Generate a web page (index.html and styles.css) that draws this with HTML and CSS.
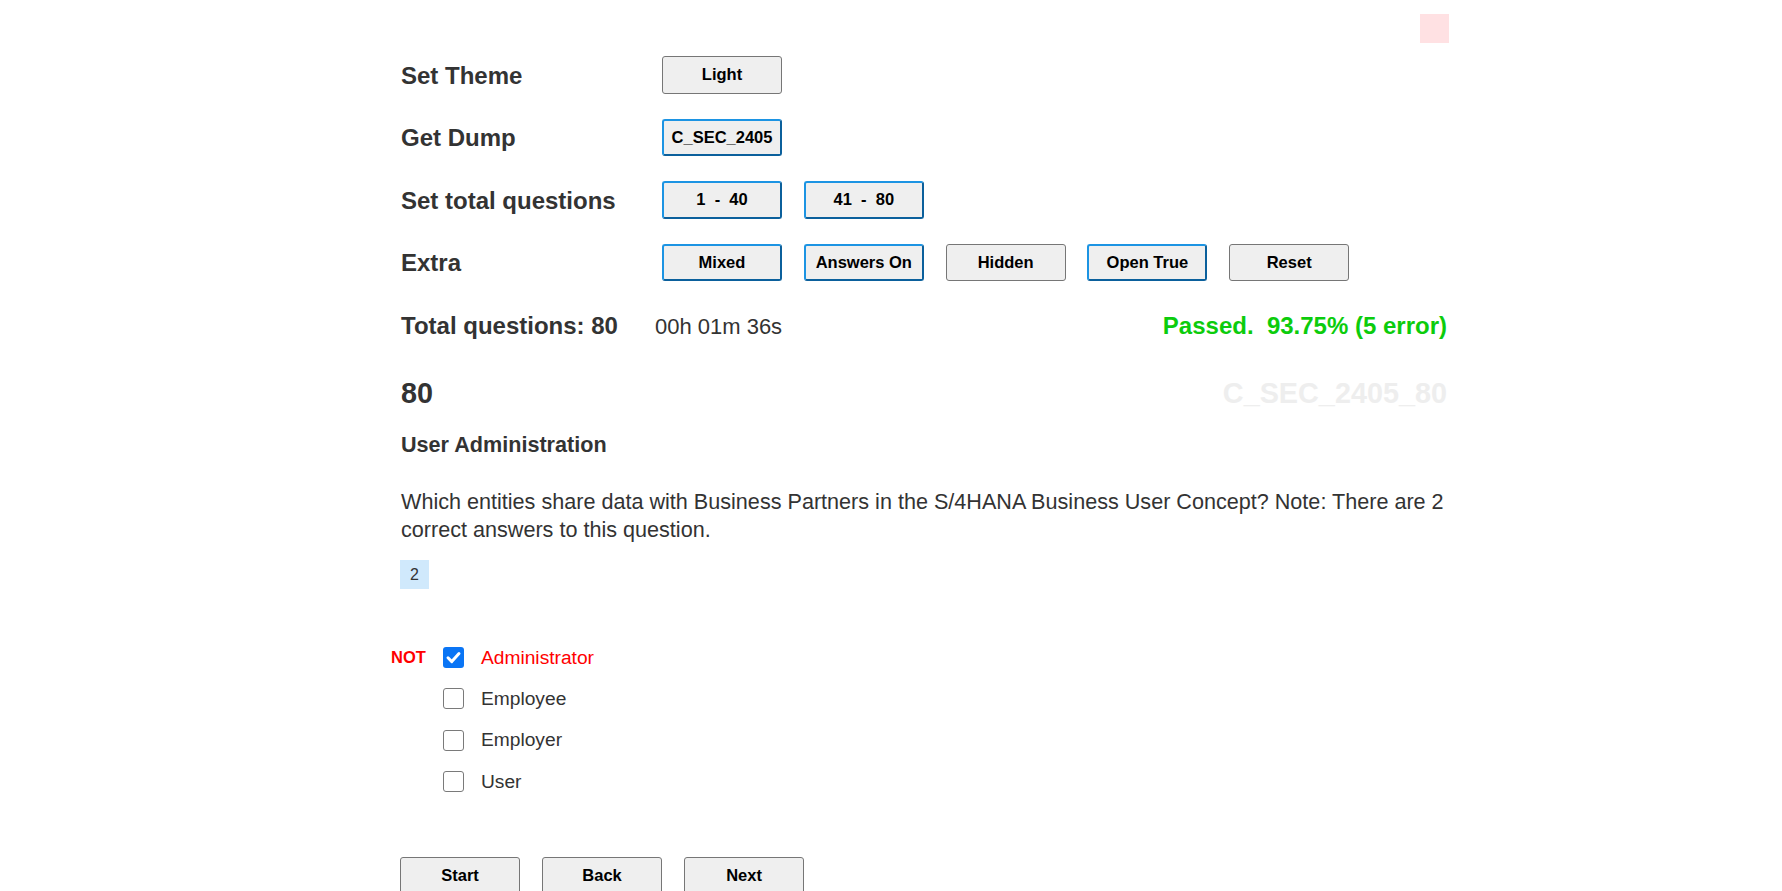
FILE: index.html
```html
<!DOCTYPE html>
<html lang="en">
<head>
<meta charset="utf-8">
<title>Quiz</title>
<link rel="stylesheet" href="styles.css">
</head>
<body>
<div class="status-dot"></div>
<main class="page">
  <section class="settings">
    <div class="setting-row">
      <div class="setting-label">Set Theme</div>
      <div class="btn-group">
        <button class="btn">Light</button>
      </div>
    </div>
    <div class="setting-row">
      <div class="setting-label">Get Dump</div>
      <div class="btn-group">
        <button class="btn btn-active">C_SEC_2405</button>
      </div>
    </div>
    <div class="setting-row">
      <div class="setting-label">Set total questions</div>
      <div class="btn-group">
        <button class="btn btn-active">1&nbsp; -&nbsp; 40</button>
        <button class="btn btn-active">41&nbsp; -&nbsp; 80</button>
      </div>
    </div>
    <div class="setting-row">
      <div class="setting-label">Extra</div>
      <div class="btn-group">
        <button class="btn btn-active">Mixed</button>
        <button class="btn btn-active">Answers On</button>
        <button class="btn">Hidden</button>
        <button class="btn btn-active">Open True</button>
        <button class="btn">Reset</button>
      </div>
    </div>
  </section>

  <div class="summary">
    <div class="total">Total questions: 80</div>
    <div class="timer">00h 01m 36s</div>
    <div class="result">Passed.&nbsp; 93.75% (5 error)</div>
  </div>

  <div class="q-head">
    <div class="q-number">80</div>
    <div class="q-id">C_SEC_2405_80</div>
  </div>

  <div class="q-topic">User Administration</div>

  <p class="q-text">Which entities share data with Business Partners in the S/4HANA Business User Concept? Note: There are 2 correct answers to this question.</p>

  <div class="badge">2</div>

  <ul class="options">
    <li class="option wrong">
      <span class="mark">NOT</span>
      <span class="cb checked"><svg viewBox="0 0 21 21" width="21" height="21"><path d="M5 10.8 L8.8 14.6 L16 6.6" fill="none" stroke="#fff" stroke-width="3" stroke-linecap="round" stroke-linejoin="round"/></svg></span>
      <span class="opt-text">Administrator</span>
    </li>
    <li class="option">
      <span class="mark"></span>
      <span class="cb"></span>
      <span class="opt-text">Employee</span>
    </li>
    <li class="option">
      <span class="mark"></span>
      <span class="cb"></span>
      <span class="opt-text">Employer</span>
    </li>
    <li class="option">
      <span class="mark"></span>
      <span class="cb"></span>
      <span class="opt-text">User</span>
    </li>
  </ul>

  <div class="nav">
    <button class="btn">Start</button>
    <button class="btn">Back</button>
    <button class="btn">Next</button>
  </div>
</main>
</body>
</html>
```

FILE: styles.css
```css
html, body {
  margin: 0;
  padding: 0;
  background: #ffffff;
}

body {
  font-family: "Liberation Sans", Arial, sans-serif;
  color: #333333;
  position: relative;
  min-height: 891px;
}

.status-dot {
  position: absolute;
  left: 1420px;
  top: 14px;
  width: 29px;
  height: 29px;
  background: #ffe1e3;
}

.page {
  width: 1046px;
  margin-left: 401px;
  padding-top: 56px;
}

.settings {
  display: flex;
  flex-direction: column;
  gap: 25px;
}

.setting-row {
  display: flex;
  align-items: center;
  height: 37.5px;
}

.setting-label {
  width: 261px;
  padding-top: 2px;
  font-size: 24px;
  font-weight: bold;
  line-height: 28px;
  color: #333;
}

.btn-group {
  display: flex;
  gap: 21.8px;
}

.btn {
  box-sizing: border-box;
  width: 120px;
  height: 37.5px;
  padding: 0;
  margin: 0;
  font-family: "Liberation Sans", Arial, sans-serif;
  font-size: 16.5px;
  font-weight: bold;
  color: #000;
  background: #efefef;
  border: 1px solid #767676;
  border-radius: 3px;
  white-space: nowrap;
}

.btn-active {
  border: 2px solid;
  border-color: #1c94e3 #0b609c #0b609c #1c94e3;
}

.summary {
  display: flex;
  align-items: baseline;
  margin-top: 31px;
  line-height: 28px;
}

.total {
  font-size: 24px;
  font-weight: bold;
  margin-right: 37px;
}

.timer {
  font-size: 22px;
}

.result {
  margin-left: auto;
  font-size: 24px;
  font-weight: bold;
  color: #0ccc0c;
}

.q-head {
  display: flex;
  justify-content: space-between;
  align-items: baseline;
  margin-top: 36px;
  line-height: 33px;
  font-size: 28.8px;
  font-weight: bold;
}

.q-id {
  color: #eeeeee;
}

.q-topic {
  margin-top: 22px;
  font-size: 21.6px;
  font-weight: bold;
  line-height: 25px;
}

.q-text {
  margin: 31px -6px 0 0;
  font-size: 21.6px;
  line-height: 28px;
}

.badge {
  margin-top: 16px;
  width: 29px;
  height: 29px;
  margin-left: -1px;
  background: #d0e9fc;
  display: flex;
  align-items: center;
  justify-content: center;
  font-size: 16px;
  color: #333;
}

.options {
  list-style: none;
  margin: 48px 0 0 -10px;
  padding: 0;
}

.option {
  display: flex;
  align-items: center;
  height: 41.3px;
}

.mark {
  width: 52.3px;
  font-size: 16.5px;
  font-weight: bold;
  color: #ff0000;
}

.cb {
  box-sizing: border-box;
  width: 21px;
  height: 21px;
  border: 1.5px solid #7a7a7a;
  border-radius: 3px;
  background: #fff;
  display: flex;
}

.cb.checked {
  border: none;
  background: #0a75f5;
}

.opt-text {
  margin-left: 16.7px;
  font-size: 19.2px;
  color: #333;
}

.option.wrong .opt-text {
  color: #ff0000;
}

.nav {
  display: flex;
  gap: 22.5px;
  margin-top: 55px;
  margin-left: -0.7px;
}

.nav .btn {
  width: 119.5px;
}
```
